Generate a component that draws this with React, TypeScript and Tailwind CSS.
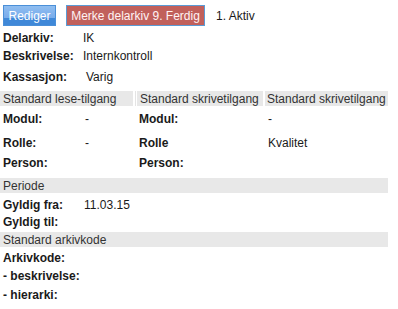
import React from "react";

const font = { fontFamily: '"Liberation Sans", Arial, sans-serif' };

function Band({ children, className = "" }: { children: React.ReactNode; className?: string }) {
  return (
    <div className={`h-[15px] bg-[#e8e8e8] text-[#333] flex items-center pl-[3px] ${className}`}>
      {children}
    </div>
  );
}

export default function App() {
  return (
    <div className="w-[398px] h-[309px] bg-white text-[12px] text-[#1a1a1a] leading-none overflow-hidden" style={font}>
      {/* buttons */}
      <div className="flex items-center h-[21px] mt-[5px] ml-[3px]">
        <button className="h-[21px] w-[53px] border border-[#4a8fd8] text-white text-[12px] flex items-center justify-center bg-[linear-gradient(to_bottom,#8fbdf0_0%,#78aceb_62%,#3f88d8_62%,#3f88d8_100%)]">
          Rediger
        </button>
        <button className="ml-[10px] h-[21px] w-[139px] border-[1.5px] border-[#5b9bd5] bg-[#c1605b] text-[#fff3f3] text-[12px] flex items-center justify-center">
          Merke delarkiv 9. Ferdig
        </button>
        <span className="ml-[11px]">1. Aktiv</span>
      </div>

      {/* delarkiv */}
      <div className="mt-[3px] flex items-center h-[18px]">
        <span className="w-[83px] pl-[3px] font-bold">Delarkiv:</span>
        <span>IK</span>
      </div>
      <div className="flex items-center h-[18px]">
        <span className="w-[83px] pl-[3px] font-bold">Beskrivelse:</span>
        <span>Internkontroll</span>
      </div>
      <div className="mt-[1px] flex items-center h-[22px]">
        <span className="w-[86px] pl-[3px] font-bold">Kassasjon:</span>
        <span>Varig</span>
      </div>

      {/* access headers */}
      <div className="mt-[3px] flex w-[388px] h-[15px]">
        <Band className="w-[133px]">Standard lese-tilgang</Band>
        <div className="w-[4px] flex justify-center">
          <div className="w-[1px] h-full bg-[#e4e4e4]" />
        </div>
        <Band className="w-[126px]">Standard skrivetilgang</Band>
        <div className="w-[2px]" />
        <Band className="flex-1 !pl-[2px]">Standard skrivetilgang</Band>
      </div>

      {[
        { l1: "Modul:", v1: "-", l2: "Modul:", v2: "-", h: "h-[22px] mt-[2px]" },
        { l1: "Rolle:", v1: "-", l2: "Rolle", v2: "Kvalitet", h: "h-[22px] mt-[2px]" },
        { l1: "Person:", v1: "", l2: "Person:", v2: "", h: "h-[18px]" },
      ].map((r, i) => (
        <div key={i} className={`flex items-center ${r.h}`}>
          <span className="w-[85px] pl-[3px] font-bold">{r.l1}</span>
          <span className="w-[54px]">{r.v1}</span>
          <span className="w-[129px] font-bold">{r.l2}</span>
          <span>{r.v2}</span>
        </div>
      ))}

      {/* periode */}
      <Band className="w-[388px] mt-[6px]">Periode</Band>
      <div className="mt-[3px] flex items-center h-[18px]">
        <span className="w-[84px] pl-[3px] font-bold">Gyldig fra:</span>
        <span>11.03.15</span>
      </div>
      <div className="flex items-center h-[16px]">
        <span className="w-[84px] pl-[3px] font-bold">Gyldig til:</span>
      </div>

      {/* arkivkode */}
      <Band className="w-[388px] mt-[2px]">Standard arkivkode</Band>
      <div className="mt-[2px] flex items-center h-[18px]">
        <span className="pl-[3px] font-bold">Arkivkode:</span>
      </div>
      <div className="flex items-center h-[18px]">
        <span className="pl-[3px] font-bold">- beskrivelse:</span>
      </div>
      <div className="mt-[1px] flex items-center h-[18px]">
        <span className="pl-[3px] font-bold">- hierarki:</span>
      </div>
    </div>
  );
}
